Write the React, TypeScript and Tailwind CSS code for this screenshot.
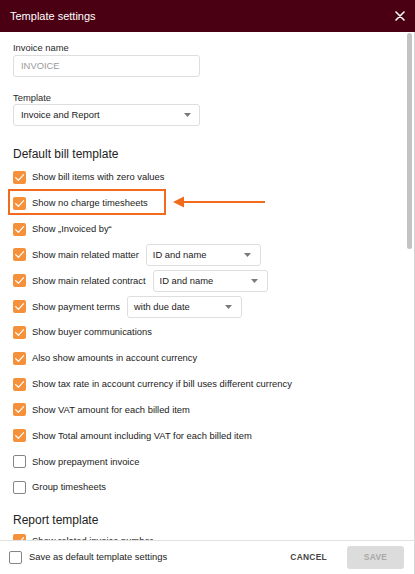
import React from "react";

const FONT = { fontFamily: "'Liberation Sans', Arial, sans-serif" };

function Check({ checked = true }: { checked?: boolean }) {
  if (!checked) {
    return <div className="w-[13px] h-[13px] shrink-0 rounded-[2px] border-[1.5px] border-[#858585] bg-white" />;
  }
  return (
    <div className="w-[13px] h-[13px] shrink-0 rounded-[2px] bg-[#f6913b] flex items-center justify-center">
      <svg width="13" height="13" viewBox="0 0 13 13">
        <polyline points="2.6,6.6 5.4,9.3 10.6,3.6" fill="none" stroke="#ffffff" strokeWidth="1.2" strokeLinecap="round" strokeLinejoin="round" />
      </svg>
    </div>
  );
}

function Caret() {
  return (
    <svg width="7" height="4" viewBox="0 0 7 4">
      <polygon points="0,0 7,0 3.5,4" fill="#7a7a7a" />
    </svg>
  );
}

function MiniSelect({ value }: { value: string }) {
  return (
    <div className="ml-[7px] w-[115px] h-[22px] rounded-[3px] border border-[#dedede] bg-white flex items-center justify-between pl-[6px] pr-[9px]">
      <span className="text-[9.4px] text-[#222]">{value}</span>
      <Caret />
    </div>
  );
}

function Row({ label, checked = true, children }: { label: string; checked?: boolean; children?: React.ReactNode }) {
  return (
    <div className="h-[25.83px] flex items-center">
      <Check checked={checked} />
      <span className="ml-[6px] text-[9.4px] text-[#222] whitespace-nowrap">{label}</span>
      {children}
    </div>
  );
}

export default function App() {
  return (
    <div className="w-[415px] h-[574px] flex flex-col overflow-hidden bg-white" style={FONT}>
      <div className="h-[32px] shrink-0 bg-[#4a0012] flex items-center justify-between pl-[10px] pr-[10px]">
        <span className="text-white text-[11px]">Template settings</span>
        <svg width="10" height="10" viewBox="0 0 10 10">
          <path d="M1 1 L9 9 M9 1 L1 9" stroke="#ffffff" strokeWidth="1.6" strokeLinecap="round" />
        </svg>
      </div>

      <div className="relative flex-1 overflow-hidden border-r border-[#d6d6d6]">
        <div className="absolute right-[2px] top-[1px] w-[5px] h-[216px] rounded-full bg-[#c3c3c3]" />
        <div className="pl-[13px] flex flex-col">
          <div className="mt-[10px] h-[12px] flex items-center text-[9.4px] text-[#2a2a2a]">Invoice name</div>
          <div className="mt-[1px] w-[187px] h-[22px] rounded-[3px] border border-[#dedede] flex items-center pl-[7px]">
            <span className="text-[9.4px] text-[#9b9b9b]">INVOICE</span>
          </div>
          <div className="mt-[15px] h-[12px] flex items-center text-[9.4px] text-[#2a2a2a]">Template</div>
          <div className="mt-[0px] w-[187px] h-[22px] rounded-[3px] border border-[#dedede] flex items-center justify-between pl-[7px] pr-[8px]">
            <span className="text-[9.4px] text-[#222]">Invoice and Report</span>
            <Caret />
          </div>

          <div className="mt-[20px] h-[16px] flex items-center text-[12px] text-[#222]">Default bill template</div>
          <div className="mt-[2.6px] flex flex-col">
            <Row label="Show bill items with zero values" />
            <div className="relative">
              <Row label="Show no charge timesheets" />
              <div className="absolute left-[-5px] top-[-1.5px] w-[158px] h-[26px] border-2 border-[#f26b1d]" />
              <svg className="absolute left-[160px] top-[6px]" width="93" height="12" viewBox="0 0 93 12">
                <polygon points="0,6 11,0.6 11,11.4" fill="#f26b1d" />
                <line x1="10" y1="6" x2="92" y2="6" stroke="#f26b1d" strokeWidth="2" />
              </svg>
            </div>
            <Row label="Show „Invoiced by“" />
            <Row label="Show main related matter">
              <MiniSelect value="ID and name" />
            </Row>
            <Row label="Show main related contract">
              <MiniSelect value="ID and name" />
            </Row>
            <Row label="Show payment terms">
              <MiniSelect value="with due date" />
            </Row>
            <Row label="Show buyer communications" />
            <Row label="Also show amounts in account currency" />
            <Row label="Show tax rate in account currency if bill uses different currency" />
            <Row label="Show VAT amount for each billed item" />
            <Row label="Show Total amount including VAT for each billed item" />
            <Row label="Show prepayment invoice" checked={false} />
            <Row label="Group timesheets" checked={false} />
          </div>
          <div className="mt-[11.6px] h-[16px] flex items-center text-[12px] text-[#222]">Report template</div>
          <Row label="Show related invoice number" />
        </div>
      </div>

      <div className="h-[34px] shrink-0 border-t border-[#e2e2e2] border-r border-r-[#d6d6d6] flex items-center pl-[9px] pr-[10px] bg-white">
        <Check checked={false} />
        <span className="ml-[7px] text-[9.4px] text-[#222]">Save as default template settings</span>
        <span className="ml-auto text-[8.4px] font-semibold tracking-[0.3px] text-[#444]">CANCEL</span>
        <div className="ml-[20px] w-[57px] h-[23px] rounded-[3px] bg-[#dcdcdc] flex items-center justify-center">
          <span className="text-[8.4px] font-semibold tracking-[0.3px] text-[#a8a8a8]">SAVE</span>
        </div>
      </div>
    </div>
  );
}
